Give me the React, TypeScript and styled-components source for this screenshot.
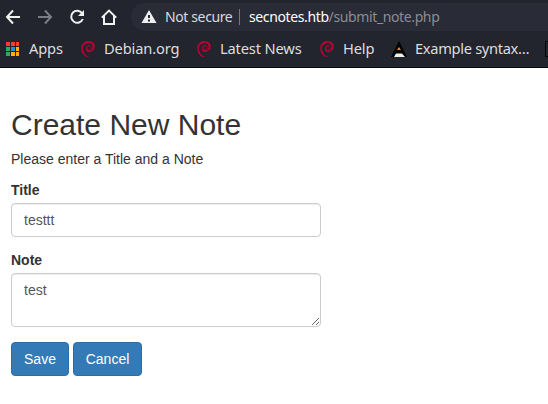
import React from "react";
import styled, { createGlobalStyle } from "styled-components";
import { SiDebian } from "react-icons/si";

const GlobalStyle = createGlobalStyle`
  *, *::before, *::after { box-sizing: border-box; }
  html, body { margin: 0; background: #fff; overflow: hidden; }
`;

const Window = styled.div`
  width: 548px;
  height: 404px;
  overflow: hidden;
  background: #fff;
`;

const Chrome = styled.header`
  height: 68px;
  background: #22242e;
  border-bottom: 1px solid #08090d;
  font-family: "Noto Sans", sans-serif;
`;

const Toolbar = styled.div`
  display: flex;
  height: 34px;
  padding-left: 5px;
`;

const NavButtons = styled.nav`
  display: flex;
  gap: 16px;
  width: 126px;
  flex: none;
  height: 34px;
  align-items: center;
`;

const NavIcon = styled.svg<{ $dim?: boolean }>`
  width: 16px;
  height: 16px;
  flex: none;
  fill: none;
  stroke: ${(p) => (p.$dim ? "#7c7d82" : "#f1f1ef")};
  stroke-width: 2;
`;

const AddressBar = styled.div`
  display: flex;
  align-items: center;
  width: 450px;
  flex: none;
  height: 28px;
  margin-top: 3px;
  padding-left: 10px;
  border-radius: 14px 0 0 14px;
  background: #292b36;
  color: #fff;
  font-size: 14px;
  letter-spacing: -0.38px;
  line-height: 28px;
  white-space: nowrap;
`;

const Warning = styled.svg`
  width: 16px;
  height: 16px;
  flex: none;
  margin-right: 8px;
`;

const Security = styled.span`
  width: 67px;
  flex: none;
  color: #d9dadd;
`;

const Divider = styled.span`
  width: 1px;
  height: 16px;
  flex: none;
  margin: 0 9px 0 7px;
  background: #777982;
`;

const Path = styled.span`
  color: #8c8d93;
`;

const Bookmarks = styled.div`
  display: flex;
  height: 30px;
  align-items: center;
  padding-left: 4px;
`;

const Bookmark = styled.a<{ $width: number }>`
  display: flex;
  flex: none;
  width: ${(p) => p.$width}px;
  align-items: center;
  gap: 8px;
  color: #dededf;
  font-size: 14.67px;
  letter-spacing: -0.15px;
  line-height: 20px;
  white-space: nowrap;

  svg { flex: none; }
`;

const BookmarkTitle = styled.span<{ $tight?: boolean }>`
  margin-bottom: 2px;
  letter-spacing: ${(p) => (p.$tight ? "-0.32px" : "inherit")};
`;

const EmptyIcon = styled.span`
  width: 16px;
  height: 16px;
  flex: none;
  border: 1px solid #050608;
`;

const Page = styled.main`
  width: 321px;
  padding: 40px 0 0 11px;
  color: #333;
  font: 14px/20px "Liberation Sans", Arial, sans-serif;
`;

const Heading = styled.h2`
  margin: 0 0 8px;
  font-size: 30px;
  font-weight: 500;
  line-height: 33px;
`;

const Intro = styled.p`
  margin: 0 0 11px;
`;

const Field = styled.div`
  margin-bottom: 13px;
`;

const Label = styled.label`
  display: block;
  margin-bottom: 3px;
  font-weight: 700;
`;

const Input = styled.input`
  display: block;
  width: 310px;
  height: 34px;
  padding: 6px 12px;
  border: 1px solid #ccc;
  border-radius: 4px;
  outline: none;
  background: #fff;
  box-shadow: inset 0 1px 1px rgba(0, 0, 0, 0.075);
  color: #555;
  font: inherit;
`;

const TextArea = styled(Input).attrs({ as: "textarea" })`
  height: 54px;
  resize: both;
`;

const Actions = styled.div`
  display: flex;
  gap: 4px;
  margin-top: 15px;
`;

const Button = styled.button<{ $width: number }>`
  width: ${(p) => p.$width}px;
  height: 34px;
  padding: 0;
  border: 1px solid #2e6da4;
  border-radius: 4px;
  background: #337ab7;
  color: #fff;
  font: inherit;
`;

const red = "#ff3b30";
const green = "#2fa866";
const amber = "#ffb300";
const appColors = [red, red, red, green, "#2688f0", amber, green, amber, amber];

const AppsIcon = () => (
  <svg width="17" height="16" viewBox="0 0 17 16" shapeRendering="crispEdges">
    {appColors.map((color, i) => (
      <rect key={i} x={2 + (i % 3) * 5} y={1 + Math.floor(i / 3) * 5} width={i % 3 === 2 ? 3 : 4} height="4" fill={color} />
    ))}
  </svg>
);

const KaliIcon = () => (
  <svg width="16" height="16" viewBox="0 0 16 16">
    <path d="M8 0 16 16H0Z" fill="#000" />
    <path d="M5 12.5h6l3 3.5h-11Z" fill="#eee" />
    <path d="m8 6 2 3H6Z" fill="#f58220" />
  </svg>
);

const Swirl = () => <SiDebian size={16} color="#c70036" stroke="#c70036" strokeWidth={0.9} />;

export default function App() {
  return (
    <Window>
      <GlobalStyle />
      <Chrome>
        <Toolbar>
          <NavButtons>
            <NavIcon viewBox="0 0 16 16"><path d="M15 8H2M8 1.5 2 8l6 6.5" /></NavIcon>
            <NavIcon viewBox="0 0 16 16" $dim><path d="M1 8h13M8 1.5 14 8l-6 6.5" /></NavIcon>
            <NavIcon viewBox="0 0 16 16">
              <path d="M13.2 4.4A6 6 0 1 0 13.8 10" />
              <path d="M15 1v6H9Z" fill="#f1f1ef" stroke="none" />
            </NavIcon>
            <NavIcon viewBox="0 0 16 16"><path d="M.8 8.6 8 1.6l7.2 7M3 7v8h10V7" /></NavIcon>
          </NavButtons>
          <AddressBar>
            <Warning viewBox="0 0 16 16">
              <path d="M8 1 15.5 14H.5Z" fill="#eee" />
              <path d="M7 6h2v3H7zM7 10.5h2v2H7z" fill="#292b36" />
            </Warning>
            <Security>Not secure</Security>
            <Divider />
            <span>secnotes.htb<Path>/submit_note.php</Path></span>
          </AddressBar>
        </Toolbar>
        <Bookmarks>
          <Bookmark $width={76}><AppsIcon /><BookmarkTitle>Apps</BookmarkTitle></Bookmark>
          <Bookmark $width={116}><Swirl /><BookmarkTitle>Debian.org</BookmarkTitle></Bookmark>
          <Bookmark $width={123}><Swirl /><BookmarkTitle>Latest News</BookmarkTitle></Bookmark>
          <Bookmark $width={72}><Swirl /><BookmarkTitle>Help</BookmarkTitle></Bookmark>
          <Bookmark $width={154}><KaliIcon /><BookmarkTitle $tight>Example syntax…</BookmarkTitle></Bookmark>
          <EmptyIcon />
        </Bookmarks>
      </Chrome>
      <Page>
        <Heading>Create New Note</Heading>
        <Intro>Please enter a Title and a Note</Intro>
        <form onSubmit={(e) => e.preventDefault()}>
          <Field>
            <Label htmlFor="title">Title</Label>
            <Input id="title" defaultValue="testtt" />
          </Field>
          <Field>
            <Label htmlFor="note">Note</Label>
            <TextArea id="note" defaultValue="test" />
          </Field>
          <Actions>
            <Button $width={58}>Save</Button>
            <Button $width={69} type="button">Cancel</Button>
          </Actions>
        </form>
      </Page>
    </Window>
  );
}
